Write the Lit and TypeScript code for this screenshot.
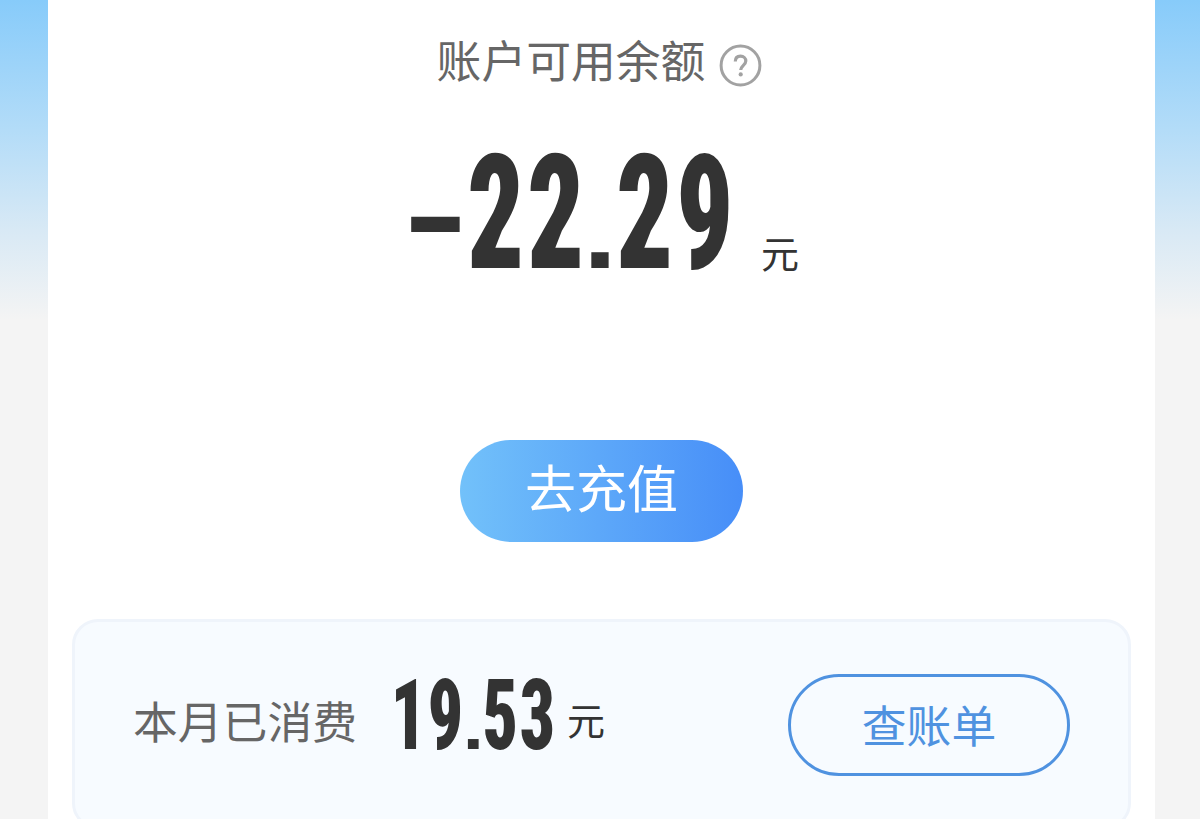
import { LitElement, html, css, svg } from 'lit';
import { customElement, property } from 'lit/decorators.js';
import { classMap } from 'lit/directives/class-map.js';

@customElement('tall-amount')
export class TallAmount extends LitElement {
  static styles = css`
    :host {
      display: flex;
      align-items: baseline;
      color: #333333;
      font-family: Roboto, 'Liberation Sans', sans-serif;
      font-size: var(--amount-size, 159px);
      font-weight: 860;
      font-stretch: 75%;
      line-height: 1;
    }

    .char {
      display: flex;
      flex: none;
      justify-content: center;
      width: 0.374em;
      transform: scaleX(0.7);
    }

    .dot,
    .sign {
      font-family: 'Liberation Sans', Arial, sans-serif;
      font-weight: 700;
      font-size: 0.67em;
    }

    .dot {
      width: 0.28em;
      transform: scaleX(1.15);
    }

    .sign {
      font-size: 0.8em;
      width: 0.4675em;
      transform: translate(-0.01em, -0.078em) scaleX(1.5);
    }
  `;

  @property() value = '';

  render() {
    return [...this.value].map(
      (c) => html`<span class=${classMap({ char: true, dot: c === '.', sign: c === '-' })}>${c}</span>`
    );
  }
}

@customElement('app-root')
export class AppRoot extends LitElement {
  static styles = css`
    :host {
      display: block;
      height: 819px;
      overflow: hidden;
      box-sizing: border-box;
      padding: 0 45px 0 48px;
      background: linear-gradient(180deg, #87cbfa 0, #b3dcf8 130px, #d8e9f5 230px, #f4f4f4 320px);
      font-family: 'Noto Sans CJK SC', sans-serif;
      color: #333333;
    }

    .card {
      display: flex;
      flex-direction: column;
      align-items: center;
      box-sizing: border-box;
      height: 819px;
      padding: 29px 24px 0;
      background: #ffffff;
    }

    .title {
      display: flex;
      flex: none;
      align-items: center;
      gap: 14px;
      height: 60px;
      padding-right: 4px;
      font-size: 44.8px;
      line-height: 60px;
      color: #666666;
    }

    .help {
      display: block;
      width: 43px;
      height: 43px;
      margin-top: 13px;
    }

    .balance {
      display: flex;
      flex: none;
      align-items: flex-end;
      align-self: stretch;
      box-sizing: border-box;
      height: 162px;
      margin-top: 43px;
      padding-left: 335px;
    }

    .balance tall-amount {
      width: 354px;
      margin-bottom: 1px;
      --amount-size: 159px;
    }

    .unit {
      font-size: 38px;
      line-height: 56px;
    }

    .balance .unit {
      margin-bottom: 14px;
    }

    .recharge {
      width: 283px;
      height: 102px;
      margin-top: 146px;
      flex: none;
      border: 0;
      border-radius: 51px;
      padding: 0 0 10px;
      background: linear-gradient(90deg, #72c1fa, #478ef8);
      color: #ffffff;
      font: inherit;
      font-size: 51px;
      line-height: 92px;
    }

    .month {
      display: flex;
      align-items: center;
      align-self: stretch;
      flex: none;
      box-sizing: border-box;
      height: 210px;
      margin-top: 77px;
      padding: 2px 58px 0;
      border: 3px solid #eff4fb;
      border-radius: 26px;
      background: #f7fbff;
    }

    .label {
      width: 257px;
      margin-bottom: 10px;
      font-size: 44.8px;
      line-height: 60px;
      color: #666666;
    }

    .month tall-amount {
      width: 177px;
      margin-bottom: 17px;
      --amount-size: 98.5px;
    }

    .month .unit {
      margin-bottom: 13px;
    }

    .bill {
      width: 282px;
      height: 102px;
      margin-left: auto;
      box-sizing: border-box;
      border: 3px solid #4f92e0;
      border-radius: 51px;
      padding: 0 0 2px;
      background: transparent;
      color: #4f92e0;
      font: inherit;
      font-size: 44.8px;
      line-height: 94px;
    }
  `;

  private helpIcon = svg`
    <circle cx="21.5" cy="21.5" r="19.4" stroke-width="3" />
    <path d="M16.3 17.6c0-3.4 2-5.4 5.2-5.4s5.3 2 5.3 4.9c0 4-5.1 4.6-5.1 9" stroke-width="3.2" />
    <circle cx="21.7" cy="30.4" r="2.1" fill="#a2a2a2" stroke="none" />
  `;

  render() {
    return html`
      <main class="card">
        <div class="title">
          <span>账户可用余额</span>
          <svg class="help" viewBox="0 0 43 43" fill="none" stroke="#a2a2a2">${this.helpIcon}</svg>
        </div>

        <div class="balance">
          <tall-amount value="-22.29"></tall-amount>
          <span class="unit">元</span>
        </div>

        <button class="recharge">去充值</button>

        <section class="month">
          <span class="label">本月已消费</span>
          <tall-amount value="19.53"></tall-amount>
          <span class="unit">元</span>
          <button class="bill">查账单</button>
        </section>
      </main>
    `;
  }
}
